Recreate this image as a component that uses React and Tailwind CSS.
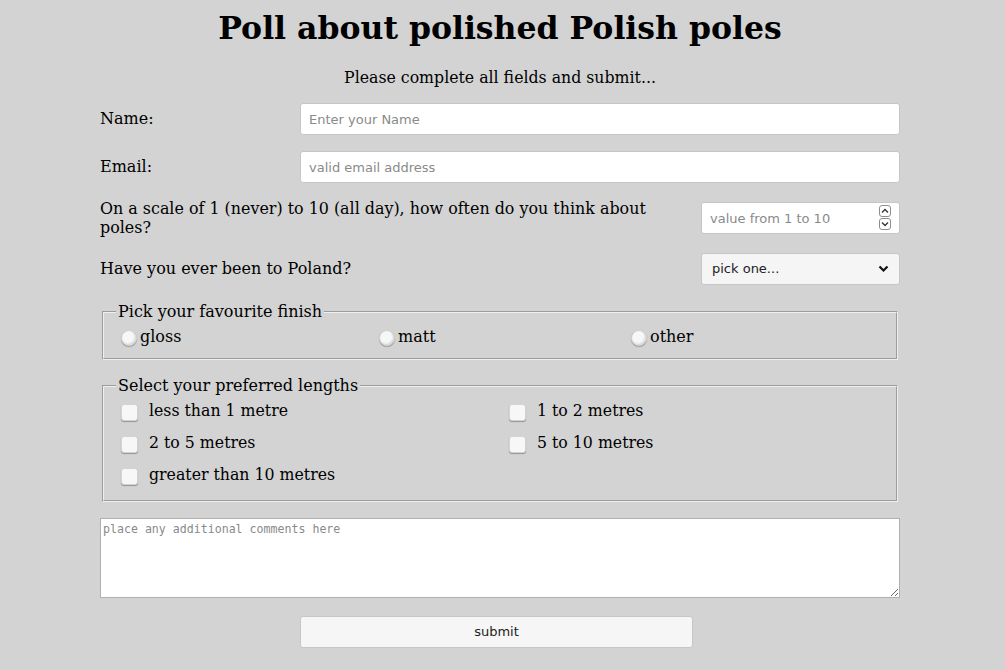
import React from 'react';

const serif = "font-['DejaVu_Serif',serif]";
const sans = "font-['DejaVu_Sans',sans-serif]";

const Radio = ({label}) => (
    <label className="flex items-center">
        <span className="ml-[5px] mr-[3px] mt-[3px] w-[16px] h-[16px] rounded-full bg-[#f7f7f7] border border-[#d0d0d0] shadow-[inset_-1px_-1px_2px_rgba(0,0,0,0.15),0_1px_1px_rgba(0,0,0,0.25)]"/>
        <span>{label}</span>
    </label>
);

const Check = ({label}) => (
    <label className="flex items-center h-[32px]">
        <span className="ml-[5px] mt-[3px] w-[17px] h-[17px] rounded-[3px] bg-[#f7f7f7] border border-[#d2d2d2] shadow-[0_1px_1px_rgba(0,0,0,0.3)]"/>
        <span className="ml-[11px] text-[15.75px]">{label}</span>
    </label>
);

const App = () => {
    return (
        <div className={`min-h-[670px] bg-[#d3d3d3] text-black ${serif}`}>
            <div className="w-[800px] ml-[100px] flex flex-col">
                <h1 className="mt-[9px] text-center text-[31.5px] leading-[37px] font-bold">Poll about polished Polish poles</h1>
                <p className="mt-[22px] text-center text-[15.75px] leading-[19px]">Please complete all fields and submit...</p>

                {/* Name */}
                <div className="mt-[16px] flex items-center h-[32px]">
                    <label className="w-[200px] text-[16px]">Name:</label>
                    <input placeholder="Enter your Name"
                           className={`flex-1 h-[32px] px-[8px] bg-white border border-[#c6c6c6] rounded-[3px] text-[13px] outline-none placeholder:text-[#8a8a8a] ${sans}`}/>
                </div>

                {/* Email */}
                <div className="mt-[16px] flex items-center h-[32px]">
                    <label className="w-[200px] text-[16px]">Email:</label>
                    <input placeholder="valid email address"
                           className={`flex-1 h-[32px] px-[8px] bg-white border border-[#c6c6c6] rounded-[3px] text-[13px] outline-none placeholder:text-[#8a8a8a] ${sans}`}/>
                </div>

                {/* Scale */}
                <div className="mt-[16px] flex items-center justify-between h-[38px]">
                    <label className="w-[570px] text-[15.9px] leading-[19px]">On a scale of 1 (never) to 10 (all day), how often do you think about poles?</label>
                    <div className="relative w-[199px] h-[32px]">
                        <input placeholder="value from 1 to 10"
                               className={`w-full h-full pl-[8px] pr-[24px] bg-white border border-[#c6c6c6] rounded-[3px] text-[13px] outline-none placeholder:text-[#8a8a8a] ${sans}`}/>
                        <div className="absolute right-[9px] top-[3px] flex flex-col gap-[1px]">
                            <span className="w-[12px] h-[12px] border border-[#8e8e8e] rounded-[3px] bg-white flex items-center justify-center">
                                <svg width="8" height="6" viewBox="0 0 8 6"><path d="M1 4.5L4 1.5L7 4.5" stroke="#333" strokeWidth="1.3" fill="none"/></svg>
                            </span>
                            <span className="w-[12px] h-[12px] border border-[#8e8e8e] rounded-[3px] bg-white flex items-center justify-center">
                                <svg width="8" height="6" viewBox="0 0 8 6"><path d="M1 1.5L4 4.5L7 1.5" stroke="#333" strokeWidth="1.3" fill="none"/></svg>
                            </span>
                        </div>
                    </div>
                </div>

                {/* Poland */}
                <div className="mt-[16px] flex items-center justify-between h-[32px]">
                    <label className="text-[16px]">Have you ever been to Poland?</label>
                    <div className={`w-[199px] h-[32px] px-[10px] flex items-center justify-between bg-[#f5f5f5] border border-[#c6c6c6] rounded-[3px] text-[13px] text-[#222] ${sans}`}>
                        <span>pick one...</span>
                        <svg width="11" height="8" viewBox="0 0 11 8"><path d="M1.5 1.5L5.5 5.5L9.5 1.5" stroke="#111" strokeWidth="2.2" fill="none"/></svg>
                    </div>
                </div>

                {/* Finish */}
                <fieldset className="mt-[17px] mx-[2px] px-[12px] pb-[15px] border-2 border-[#f0f0f0] [border-style:groove] text-[16px]">
                    <legend className="px-[2px] leading-[19px]">Pick your favourite finish</legend>
                    <div className="pt-[6px] grid grid-cols-[258px_252px_1fr] h-[22px] leading-[19px]">
                        <Radio label="gloss"/>
                        <Radio label="matt"/>
                        <Radio label="other"/>
                    </div>
                </fieldset>

                {/* Lengths */}
                <fieldset className="mt-[16px] mx-[2px] px-[12px] pb-[9px] border-2 border-[#f0f0f0] [border-style:groove] text-[16px]">
                    <legend className="px-[2px] leading-[19px]">Select your preferred lengths</legend>
                    <div className="grid grid-cols-[388px_1fr]">
                        <Check label="less than 1 metre"/>
                        <Check label="1 to 2 metres"/>
                        <Check label="2 to 5 metres"/>
                        <Check label="5 to 10 metres"/>
                        <Check label="greater than 10 metres"/>
                    </div>
                </fieldset>

                <textarea placeholder="place any additional comments here"
                          className="mt-[16px] w-full h-[80px] p-[2px] bg-white border border-[#b0b0b0] text-[11.6px] font-['DejaVu_Sans_Mono',monospace] outline-none placeholder:text-[#8a8a8a]"/>

                <button className={`mt-[18px] ml-[200px] w-[393px] h-[32px] bg-[#f6f6f6] border border-[#c6c6c6] rounded-[3px] text-[13px] text-[#222] ${sans}`}>submit</button>
            </div>
        </div>
    );
};

export default App;
